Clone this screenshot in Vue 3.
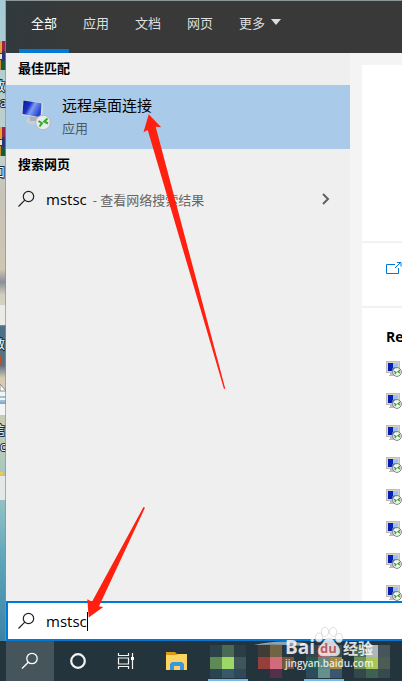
<script setup>
import { ref } from 'vue'

const keyword = ref('mstsc')
const active = ref(0)
const tabs = ['全部', '应用', '文档', '网页']

const mosaics = [
  ['#2c4248', '#4b6a54', '#2c3d45', '#5d8a55', '#9bd865', '#3e5559', '#2b4550', '#39596a', '#30495a'],
  ['#413b38', '#716443', '#28363d', '#943f3c', '#d26a7c', '#73563c', '#24343c', '#55304a', '#24343c'],
  ['#35454b', '#a5484a', '#3b4a50', '#245850', '#5d8a84', '#a08a45', '#2b4c5c', '#66908c', '#3b5670'],
  ['#4c6b55', '#aeb8b6', '#46555a', '#6d8f58', '#a8c65c', '#4c5c52', '#32484a', '#3f6250', '#344c4e']
]
</script>

<template>
  <div class="screen">
    <div class="main">
      <div class="desktop">
        <svg width="6" height="641" viewBox="0 0 6 641">
          <defs>
            <linearGradient id="sky" x1="0" y1="0" x2="0" y2="1">
              <stop offset="0" stop-color="#a3cbd8" />
              <stop offset=".1" stop-color="#b2cdd0" />
              <stop offset=".25" stop-color="#c3d0c8" />
              <stop offset=".3" stop-color="#c8c3b8" />
              <stop offset=".42" stop-color="#cfc6b2" />
              <stop offset=".44" stop-color="#8a8f97" />
              <stop offset=".46" stop-color="#d3cdbd" />
              <stop offset=".5" stop-color="#d9d8cf" />
              <stop offset=".51" stop-color="#4c7088" />
              <stop offset=".57" stop-color="#5b7486" />
              <stop offset=".59" stop-color="#d8ccb0" />
              <stop offset=".7" stop-color="#b9cbbb" />
              <stop offset=".78" stop-color="#94c2c4" />
              <stop offset=".88" stop-color="#5ba3ba" />
              <stop offset="1" stop-color="#3c82a6" />
            </linearGradient>
          </defs>
          <rect width="6" height="641" fill="url(#sky)" />
          <g v-for="y in [41, 127]" :key="y">
            <rect :y="y" width="6" height="10" fill="#9b2446" />
            <rect :y="y + 10" width="6" height="10" fill="#27357f" />
            <rect :y="y + 20" width="6" height="9" fill="#145c38" />
            <rect :y="y" width="2" height="12" fill="#e2a53a" />
            <rect :y="y + 13" width="2" height="5" fill="#f1e3c8" />
            <rect :y="y + 19" width="1" height="10" fill="#c98a2d" />
          </g>
          <rect y="305" width="6" height="20" fill="#e9ebe8" />
          <rect y="355" width="2" height="11" fill="#b8522c" />
          <path d="M0 384 L6 392 V415 H0z" fill="#f3f5f5" />
          <path d="M0 384 L6 391 H0z" fill="#fff" stroke="#8b8b8b" />
          <path d="M0 397h6M0 401h6" stroke="#4d86c6" />
          <path d="M0 403h6" stroke="#2c5a94" />
          <rect y="472" width="3" height="3" fill="#e8c95c" />
          <rect y="476" width="6" height="24" fill="#e4e8e6" />
          <g class="label">
            <text x="-7" y="91">教</text>
            <text x="0" y="107">a</text>
            <text x="-7" y="177">口</text>
            <text x="-7" y="349">教</text>
            <text x="-7" y="435">信</text>
            <text x="0" y="451">c</text>
          </g>
          <path d="M5.5 0V641" stroke="#7f949b" stroke-opacity=".7" />
        </svg>
      </div>

      <div class="panel">
        <nav class="tabs">
          <button
            v-for="(tab, index) in tabs"
            :key="tab"
            class="tab"
            :class="{ active: index === active }"
            @click="active = index"
          >{{ tab }}</button>
          <button class="tab more">
            更多
            <svg width="10" height="6" viewBox="0 0 10 6"><path d="M0 0h10L5 6z" fill="#dedede" /></svg>
          </button>
        </nav>

        <div class="content">
          <div class="results">
            <h2 class="group">最佳匹配</h2>
            <button class="best">
              <svg width="32" height="32" viewBox="0 0 32 32">
                <defs>
                  <linearGradient id="crt" x1="0" y1="0" x2="1" y2=".5">
                    <stop offset="0" stop-color="#0c1690" />
                    <stop offset=".4" stop-color="#1a30c4" />
                    <stop offset=".6" stop-color="#7f9cf0" />
                    <stop offset="1" stop-color="#2444d0" />
                  </linearGradient>
                </defs>
                <ellipse cx="12" cy="21" rx="7" ry="3.500" fill="#c9ced3" />
                <path d="M9 16h9v5H9z" fill="#a8b0ba" />
                <path d="M2 0l20 3-1 15L1 15z" fill="#d5dde5" />
                <path d="M2.500 .500l18 2.800-1 14L1.500 14z" fill="url(#crt)" />
                <circle cx="22" cy="22.500" r="7.300" fill="#e9ebea" stroke="#b4b9bd" />
                <path d="M17.500 21l3.500 2.200-2.500 3.300M26.500 18.500l-3.200 3 3.700 2" fill="none" stroke="#2fae2b" stroke-width="2" />
              </svg>
              <span class="best-text">
                <span class="name">远程桌面连接</span>
                <span class="kind">应用</span>
              </span>
            </button>
            <h2 class="group">搜索网页</h2>
            <button class="web">
              <svg width="18" height="18" viewBox="0 0 18 18" fill="none" stroke="#222" stroke-width="1.2">
                <circle cx="10.5" cy="6.5" r="5.2" />
                <path d="M6.8 10.2L.5 16.5" />
              </svg>
              <span class="query">{{ keyword }}</span>
              <span class="hint">- 查看网络搜索结果</span>
              <svg class="chevron" width="8" height="12" viewBox="0 0 8 12" fill="none" stroke="#606060" stroke-width="2">
                <path d="M1 1l5 5-5 5" />
              </svg>
            </button>
          </div>

          <div class="preview">
            <div class="card">
              <div class="hero"></div>
              <a class="open" href="#" aria-label="打开">
                <svg width="16" height="13" viewBox="0 0 16 13" fill="none" stroke="#0078d7">
                  <path d="M9 2.5H.5v9h12V6M9 6l5-5M11 .5h4v4" />
                </svg>
              </a>
              <div class="recent">
                <h3>Re</h3>
                <ul>
                  <li v-for="n in 8" :key="n">
                    <svg width="16" height="16" viewBox="0 0 16 16">
                      <path d="M4 12h5v1h2v2H3v-1h1z" fill="#bcbfc2" />
                      <rect x=".5" y=".5" width="13" height="11" fill="#d6d4c8" stroke="#c0beb4" />
                      <rect x="2" y="2" width="10" height="8" fill="#0c1fb4" />
                      <path d="M7 2h5v4L7 7z" fill="#9bc0f4" />
                      <path d="M6 7l6-1v4H6z" fill="#3f6edb" />
                      <circle cx="11" cy="11" r="4.400" fill="#f4f5f2" stroke="#7e837c" />
                      <path d="M8 10.200l2 1.300-1.300 1.700M14 9l-2 1.600 2 1.400" fill="none" stroke="#2a9c26" stroke-width="1.2" />
                    </svg>
                  </li>
                </ul>
              </div>
            </div>
          </div>
        </div>

        <label class="search">
          <svg width="18" height="18" viewBox="0 0 18 18" fill="none" stroke="#222" stroke-width="1.2">
            <circle cx="10.5" cy="6.5" r="5.2" />
            <path d="M6.8 10.2L.5 16.5" />
          </svg>
          <span class="field">
            <input v-model="keyword" type="text" aria-label="搜索" />
            <i class="caret"></i>
          </span>
        </label>
      </div>

      <svg class="arrows" width="402" height="641" viewBox="0 0 402 641" fill="#ff2010">
        <path d="M148.7 114.3L143.5 132.3L147.7 130L224 389L225.2 388.5L155.7 126.7L161.2 127.3z" />
        <path d="M88.7 617.5L87.3 599.3L92 601.7L143.5 507L145 507.7L99 606.3L103.2 607z" />
      </svg>
    </div>

    <div class="taskbar">
      <button class="task start" aria-label="搜索">
        <svg width="18" height="18" viewBox="0 0 18 18" fill="none" stroke="#fff" stroke-width="1.3">
          <circle cx="11" cy="6.5" r="5.2" />
          <path d="M7.3 10.2L1 16.5" />
        </svg>
      </button>
      <button class="task" aria-label="Cortana">
        <svg width="18" height="18" viewBox="0 0 18 18"><circle cx="9" cy="9" r="6.8" fill="none" stroke="#f4f4f4" stroke-width="2.2" /></svg>
      </button>
      <button class="task" aria-label="任务视图">
        <svg width="18" height="18" viewBox="0 0 18 18" fill="none" stroke="#f4f4f4" stroke-width="1.2">
          <path d="M1.5 1v2.500h10V1M1.500 17v-2.500h10V17M1.500 6h10v6h-10zM15.500 1v16" />
          <rect x="14" y="5" width="3" height="3" fill="#fff" stroke="none" />
        </svg>
      </button>
      <button class="task folder" aria-label="文件资源管理器">
        <svg width="22" height="19" viewBox="0 0 22 19">
          <path d="M0 0h9l2 2h10v5H0z" fill="#dd9a17" />
          <path d="M0 3h10l2-1h9v16H0z" fill="#fcd462" />
          <path d="M4 18v-6l2-2h10l2 2v6h-4v-4H8v4z" fill="#3a97dd" />
        </svg>
      </button>
      <button
        v-for="(cells, index) in mosaics"
        :key="index"
        class="task app"
        :class="{ running: index % 2 === 0 }"
        :aria-label="'应用 ' + (index + 1)"
      >
        <svg width="36" height="33" viewBox="0 0 36 33" shape-rendering="crispEdges">
          <rect
            v-for="(color, i) in cells"
            :key="i"
            :x="(i % 3) * 12"
            :y="Math.floor(i / 3) * 12"
            width="12"
            :height="i > 5 ? 9 : 12"
            :fill="color"
          />
        </svg>
      </button>
    </div>

    <svg class="watermark" width="120" height="46" viewBox="0 0 120 46">
      <path d="M0 18Q24 12 51 16L50 19Q26 17 0 18z" fill="#a9c0cc" fill-opacity=".8" />
      <g fill="#fff" fill-opacity=".8" stroke="#c8c8c8" stroke-width=".6">
        <ellipse cx="65" cy="10.500" rx="3.500" ry="4.500" />
        <ellipse cx="71" cy="4.800" rx="3.600" ry="4.600" />
        <ellipse cx="79" cy="4.800" rx="3.600" ry="4.600" />
        <ellipse cx="85" cy="11" rx="3.500" ry="4.500" />
        <path d="M75 11c4 0 5 4 8 7 4 4 4 11-2 11H69c-6 0-6-7-2-11 3-3 4-7 8-7z" />
      </g>
      <text class="bai" x="31" y="27">Bai</text>
      <text class="du" x="66" y="26">du</text>
      <text class="jy" x="89" y="27">经验</text>
      <text class="site" x="31" y="40">jingyan.baidu.com</text>
    </svg>
  </div>
</template>

<style>
body {
  margin: 0;
}
</style>

<style scoped>
.screen {
  position: relative;
  display: flex;
  flex-direction: column;
  min-height: 100vh;
  overflow: hidden;
  font-family: 'Open Sans', 'Noto Sans CJK SC', sans-serif;
  font-size: 13px;
  color: #000;
}

button {
  padding: 0;
  border: none;
  background: none;
  font: inherit;
  color: inherit;
  text-align: left;
}

svg {
  display: block;
  flex: none;
}

.main {
  position: relative;
  display: flex;
  flex: 1;
}

.desktop {
  width: 6px;
  flex: none;
  background: #3c82a6;
  overflow: hidden;
}

.label {
  font-size: 12px;
  fill: #fff;
  stroke: #1d2a30;
  stroke-width: 2px;
  paint-order: stroke;
}

.panel {
  display: flex;
  flex: 1;
  flex-direction: column;
  min-width: 0;
  border-top: 1px solid #8d9698;
}

.tabs {
  display: flex;
  gap: 2px;
  height: 52px;
  padding-left: 13px;
  background: linear-gradient(90deg, #303a3d, #393939 70px);
}

.tab {
  box-sizing: border-box;
  padding: 0 12px 6px;
  border-bottom: 4px solid transparent;
  white-space: nowrap;
  color: #dedede;
}

.active {
  border-bottom-color: #0078d7;
  color: #fff;
}

.more {
  display: flex;
  gap: 6px;
  align-items: center;
}

.content {
  display: flex;
  flex: 1;
  background: #efefef;
}

.results {
  flex: 1;
  min-width: 0;
}

.group {
  margin: 0;
  padding: 0 0 2px 12px;
  font-size: 13px;
  font-weight: 700;
  line-height: 30px;
}

.best {
  display: flex;
  gap: 9px;
  align-items: center;
  width: 100%;
  height: 64px;
  padding: 0 0 2px 15px;
  background: #a9cbe9;
}

.best-text {
  display: flex;
  flex-direction: column;
}

.name {
  font-size: 15px;
  line-height: 24px;
}

.kind {
  line-height: 22px;
  color: #4d5a66;
}

.web {
  display: flex;
  align-items: center;
  width: 100%;
  height: 36px;
  padding: 0 20px 0 12px;
}

.query {
  margin-left: 10px;
  font-size: 15px;
}

.hint {
  margin-left: 6px;
  white-space: nowrap;
  color: #666;
}

.chevron {
  margin-left: auto;
}

.preview {
  display: flex;
  width: 52px;
  padding-top: 12px;
  box-sizing: border-box;
  background: #f4f4f4;
}

.card {
  flex: 1;
  margin-left: 12px;
  background: #fff;
}

.hero {
  height: 176px;
  border-bottom: 2px solid #f2f2f2;
}

.open {
  display: flex;
  align-items: center;
  height: 51px;
  padding: 0 0 12px 24px;
  border-bottom: 2px solid #f2f2f2;
}

.recent {
  height: 293px;
  padding-left: 24px;
  overflow: hidden;
}

h3 {
  margin: 0;
  padding: 17px 0 12px;
  font-size: 14px;
  line-height: 24px;
}

ul {
  display: grid;
  gap: 16px;
  margin: 0;
  padding: 0;
  list-style: none;
}

.search {
  display: flex;
  gap: 10px;
  align-items: center;
  box-sizing: border-box;
  height: 40px;
  padding-left: 12px;
  border: solid #0078d7;
  border-width: 2px 0;
  box-shadow: inset 2px 0 #0078d7;
  background: #fff;
}

.field {
  position: relative;
  flex: 1;
}

.field input {
  display: block;
  width: 100%;
  padding: 0;
  border: none;
  outline: none;
  background: none;
  font: inherit;
  font-size: 15px;
}

.caret {
  position: absolute;
  top: 1px;
  left: 41px;
  width: 1px;
  height: 19px;
  background: #000;
}

.arrows {
  position: absolute;
  top: 0;
  left: 0;
  pointer-events: none;
}

.taskbar {
  display: flex;
  height: 40px;
  padding-left: 6px;
  background: #24343c;
}

.task {
  display: flex;
  flex: none;
  align-items: center;
  justify-content: center;
  box-sizing: border-box;
  width: 48px;
}

.start {
  background: #46545b;
}

.folder {
  width: 54px;
}

.app {
  padding: 0 6px;
}

.running {
  background: linear-gradient(#76b9ed, #76b9ed) center bottom / 40px 2px no-repeat;
}

.watermark {
  position: absolute;
  right: 28px;
  bottom: 8px;
  pointer-events: none;
}

.watermark text {
  fill: #fff;
  fill-opacity: .85;
  font-weight: 700;
}

.bai {
  font-size: 19px;
}

.watermark .du {
  fill: #b0494c;
  font-size: 13px;
}

.jy {
  font-size: 15px;
}

.watermark .site {
  font-size: 10px;
  font-weight: 600;
}
</style>
